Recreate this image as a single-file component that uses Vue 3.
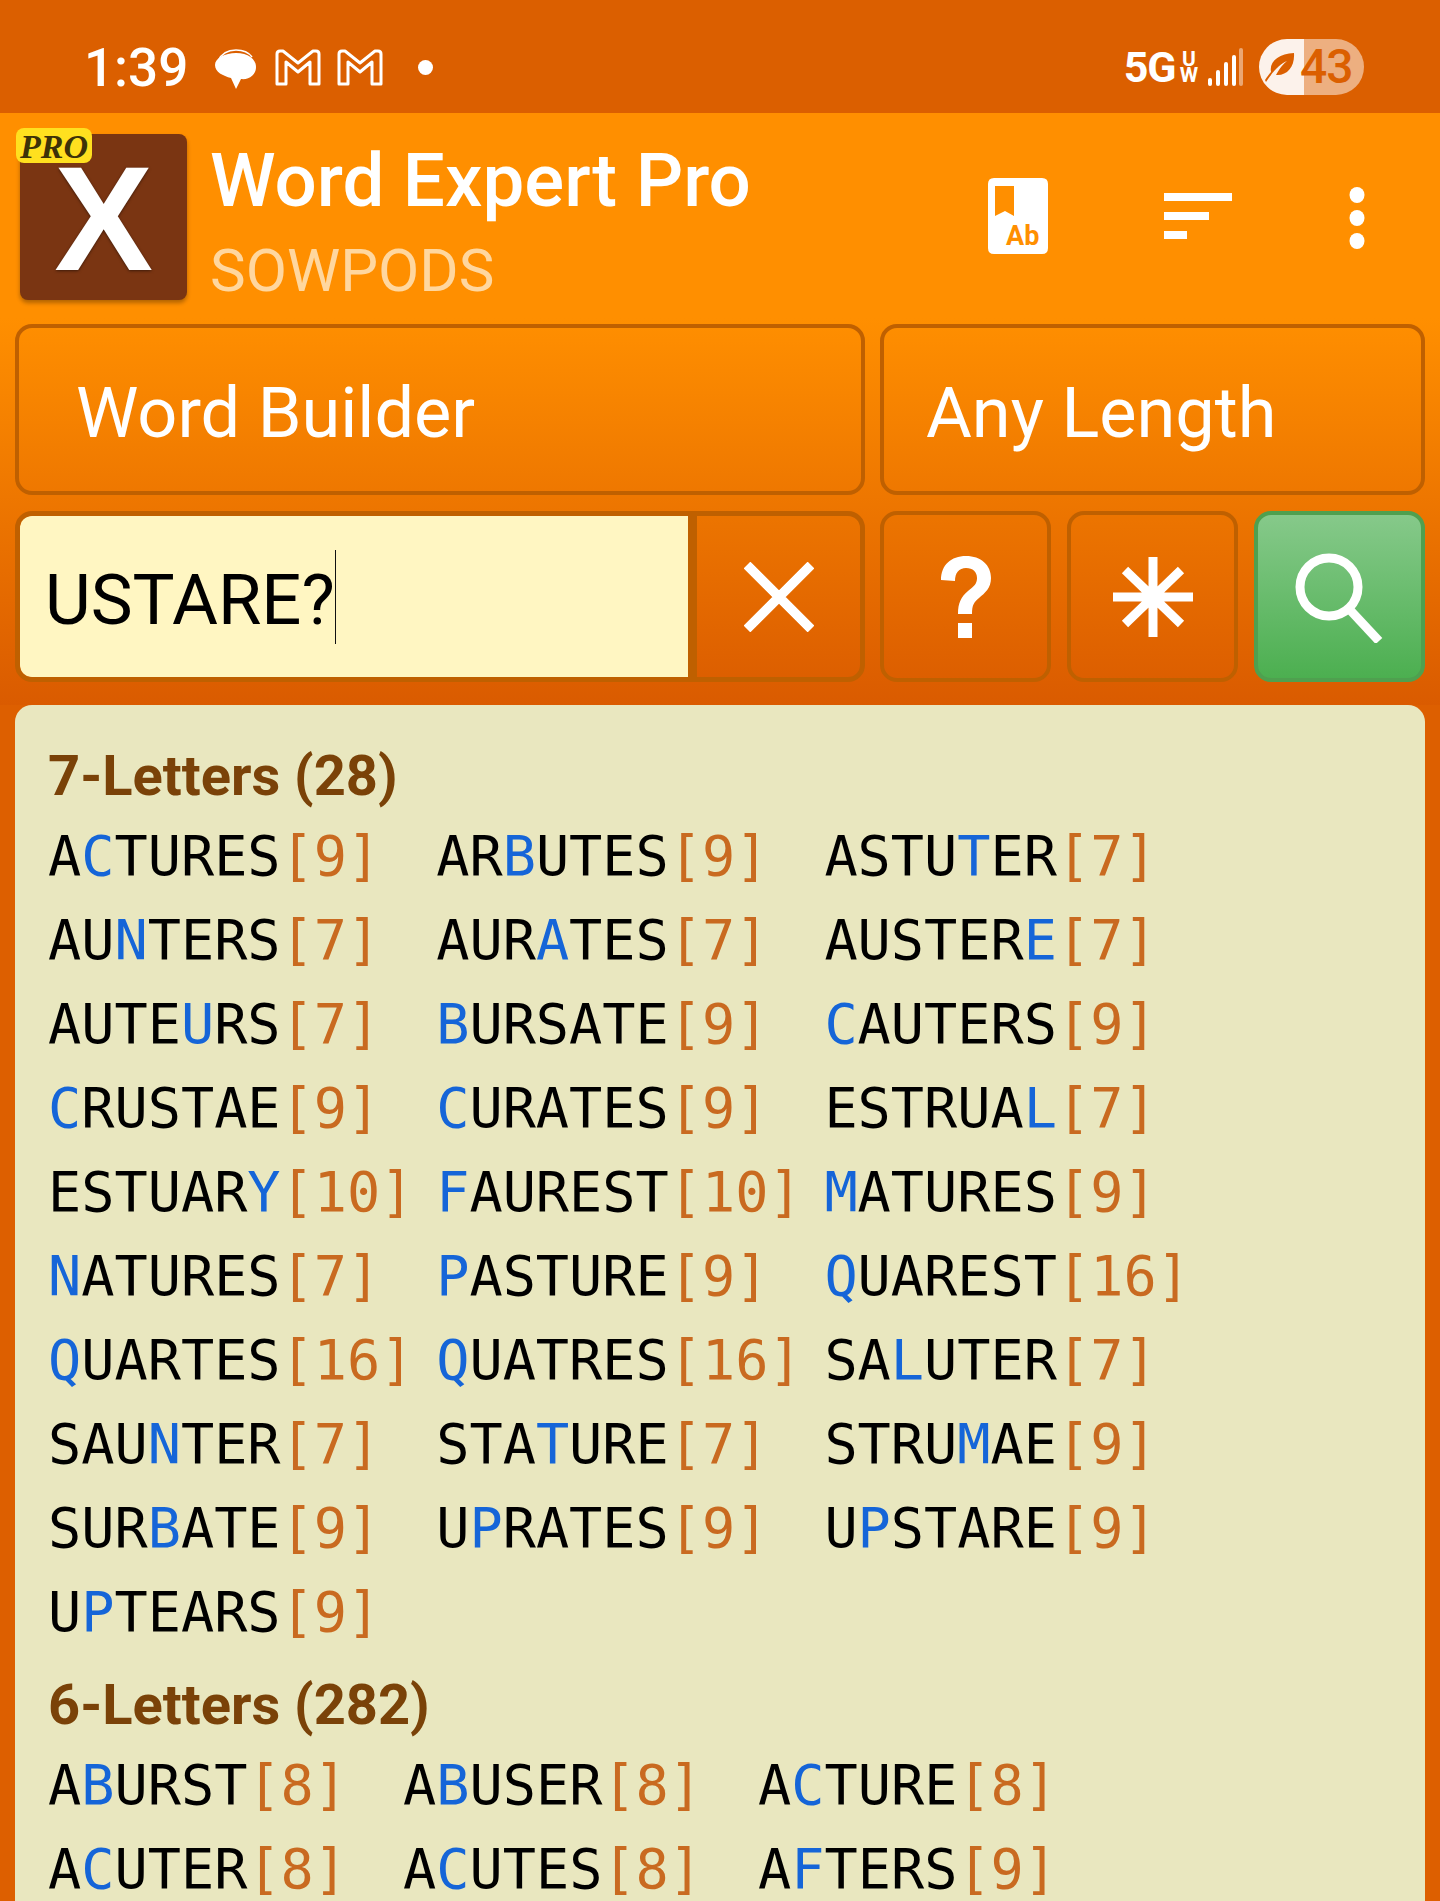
<script setup>
// word, index of the letter that came from the blank, score
const sevens = [
  ['ACTURES', 1, 9], ['ARBUTES', 2, 9], ['ASTUTER', 4, 7],
  ['AUNTERS', 2, 7], ['AURATES', 3, 7], ['AUSTERE', 6, 7],
  ['AUTEURS', 4, 7], ['BURSATE', 0, 9], ['CAUTERS', 0, 9],
  ['CRUSTAE', 0, 9], ['CURATES', 0, 9], ['ESTRUAL', 6, 7],
  ['ESTUARY', 6, 10], ['FAUREST', 0, 10], ['MATURES', 0, 9],
  ['NATURES', 0, 7], ['PASTURE', 0, 9], ['QUAREST', 0, 16],
  ['QUARTES', 0, 16], ['QUATRES', 0, 16], ['SALUTER', 2, 7],
  ['SAUNTER', 3, 7], ['STATURE', 3, 7], ['STRUMAE', 4, 9],
  ['SURBATE', 3, 9], ['UPRATES', 1, 9], ['UPSTARE', 1, 9],
  ['UPTEARS', 1, 9],
]
const sixes = [
  ['ABURST', 1, 8], ['ABUSER', 1, 8], ['ACTURE', 1, 8],
  ['ACUTER', 1, 8], ['ACUTES', 1, 8], ['AFTERS', 1, 9],
]
const groups = [
  { title: '7-Letters (28)', cls: 'cols-7', words: sevens },
  { title: '6-Letters (282)', cls: 'cols-6', words: sixes },
]
</script>

<template>
  <div class="app">
    <div class="status">
      <span class="time">1:39</span>
      <svg class="chat" viewBox="0 0 41 40"><path d="M3 12 Q8 1 21 1 Q32 1 37 8" fill="none" stroke="#fff" stroke-width="1.6"/><path d="M21 4 C33 4 41 10 41 18 C41 26 34 31 26 30 L21 40 L16 29 C8 27 0 23 0 16 C0 9 10 4 21 4 Z" fill="#fff"/></svg>
      <svg class="gm first" viewBox="0 0 46 37"><path d="M2 5 Q2 2 5 2 L8 2 L23 14 L38 2 L41 2 Q44 2 44 5 L44 35 L35 35 L35 13 L23 23 L11 13 L11 35 L2 35 Z" fill="none" stroke="#fff" stroke-width="3" stroke-linejoin="round"/></svg>
      <svg class="gm" viewBox="0 0 46 37"><path d="M2 5 Q2 2 5 2 L8 2 L23 14 L38 2 L41 2 Q44 2 44 5 L44 35 L35 35 L35 13 L23 23 L11 13 L11 35 L2 35 Z" fill="none" stroke="#fff" stroke-width="3" stroke-linejoin="round"/></svg>
      <span class="dot"></span>
      <div class="status-right">
        <span class="net">5G</span>
        <span class="uw"><span>U</span><span>W</span></span>
        <svg class="signal" viewBox="0 0 35 38">
          <rect x="0" y="30" width="4" height="8" rx="2" fill="#fff"/>
          <rect x="8" y="22" width="4" height="16" rx="2" fill="#fff"/>
          <rect x="16" y="14" width="4" height="24" rx="2" fill="#fff"/>
          <rect x="24" y="7" width="4" height="31" rx="2" fill="#fff"/>
          <rect x="31" y="0" width="4" height="38" rx="2" fill="#fff" opacity=".45"/>
        </svg>
        <div class="battery">
          <div class="batt-left">
            <svg viewBox="0 0 30 32"><path d="M6 21 C4 10 14 3 29 2 C30 16 22 25 11 24 C15 17 18 13 22 10 C15 13 9 19 1 31 L0 29 C2 26 4 23 6 21 Z" fill="#db5f00"/></svg>
          </div>
          <div class="batt-right"><span>43</span></div>
        </div>
      </div>
    </div>

    <div class="header">
      <div class="logo">
        <span class="logo-x">X</span>
        <span class="pro">PRO</span>
      </div>
      <div class="titles">
        <div class="title">Word Expert Pro</div>
        <div class="subtitle">SOWPODS</div>
      </div>
      <div class="actions">
        <svg class="book" viewBox="0 0 60 76">
          <path d="M6 0 H54 Q60 0 60 6 V70 Q60 76 54 76 H6 Q0 76 0 70 V6 Q0 0 6 0 Z" fill="#fff"/>
          <path d="M7 8 H26 V38 L17 33 L7 38 Z" fill="#ff8f00"/>
          <text x="18" y="67" class="book-text">Ab</text>
        </svg>
        <svg class="sort" viewBox="0 0 68 46">
          <rect x="0" y="0" width="68" height="8" fill="#fff"/>
          <rect x="0" y="19" width="45" height="8" fill="#fff"/>
          <rect x="0" y="38" width="23" height="8" fill="#fff"/>
        </svg>
        <svg class="more" viewBox="0 0 16 62">
          <ellipse cx="8" cy="8" rx="7.5" ry="8" fill="#fff"/>
          <ellipse cx="8" cy="31" rx="7.5" ry="8" fill="#fff"/>
          <ellipse cx="8" cy="54" rx="7.5" ry="8" fill="#fff"/>
        </svg>
      </div>
    </div>

    <div class="controls">
      <div class="row">
        <div class="btn wide left-col">Word Builder</div>
        <div class="btn wide right-col">Any Length</div>
      </div>
      <div class="row">
        <div class="input-group left-col">
          <div class="field">USTARE?<span class="caret"></span></div>
          <div class="clear">
            <svg viewBox="0 0 70 70" width="70" height="70"><path d="M3 3 L67 67 M67 3 L3 67" stroke="#fff" stroke-width="9.5" fill="none"/></svg>
          </div>
        </div>
        <div class="tools right-col">
          <div class="btn tool">
            <svg viewBox="0 0 50 82" width="50" height="82"><path d="M0 24 C0 9 10 0 25 0 C40 0 50 9 50 22 C50 32 44 37 38 42 C33 46 31 49 31 58 H17 C17 47 20 41 27 35 C33 30 36 28 36 22 C36 16 32 12 25 12 C18 12 14 17 14 25 Z" fill="#fff"/><rect x="17" y="67" width="14" height="15" fill="#fff"/></svg>
          </div>
          <div class="btn tool">
            <svg viewBox="0 0 80 80" width="80" height="80"><path d="M40 0 V80 M0 40 H80 M12 13 L68 67 M68 13 L12 67" stroke="#fff" stroke-width="9" fill="none"/></svg>
          </div>
          <div class="btn tool go">
            <svg viewBox="0 0 90 90" width="90" height="90"><circle cx="34" cy="34" r="29" stroke="#fff" stroke-width="9" fill="none"/><path d="M56 58 L84 88" stroke="#fff" stroke-width="9" fill="none"/></svg>
          </div>
        </div>
      </div>
    </div>

    <div class="panel">
      <section v-for="g in groups" :key="g.title" class="group">
        <h2 class="heading">{{ g.title }}</h2>
        <div class="words" :class="g.cls">
          <div v-for="w in g.words" :key="w[0]" class="word">
            <span>{{ w[0].slice(0, w[1]) }}</span><span class="blank">{{ w[0][w[1]] }}</span><span>{{ w[0].slice(w[1] + 1) }}</span><span class="score">[{{ w[2] }}]</span>
          </div>
        </div>
      </section>
    </div>
  </div>
</template>

<style>
body { margin: 0; background: #dd5f00; }
</style>

<style scoped>
.app {
  width: 1440px;
  height: 1901px;
  overflow: hidden;
  background: #dd5f00;
  font-family: Roboto, sans-serif;
  display: flex;
  flex-direction: column;
}

/* status bar */
.status {
  height: 113px;
  flex-shrink: 0;
  background: #db5f00;
  display: flex;
  align-items: center;
  padding: 21px 76px 0 84px;
  box-sizing: border-box;
  color: #fff;
}
.time { font-size: 53px; font-weight: 500; width: 131px; margin-top: 2px; }
.chat { width: 41px; height: 40px; margin-top: 3px; }
.gm { width: 46px; height: 37px; margin-left: 16px; }
.gm.first { margin-left: 19px; }
.dot { width: 15px; height: 15px; border-radius: 50%; background: #fff; margin-left: 35px; }
.status-right { margin-left: auto; display: flex; align-items: center; }
.net { font-size: 43px; font-weight: 700; letter-spacing: -1px; }
.uw { display: flex; flex-direction: column; font-size: 21px; font-weight: 700; line-height: 16px; margin-left: 4px; text-align: center; }
.signal { width: 35px; height: 38px; margin-left: 10px; }
.battery { display: flex; width: 105px; height: 56px; border-radius: 28px; overflow: hidden; margin-left: 16px; }
.batt-left { width: 45px; background: rgba(255, 255, 255, 0.92); display: flex; align-items: center; padding-left: 6px; box-sizing: border-box; }
.batt-left svg { width: 30px; height: 32px; }
.batt-right { flex: 1; background: rgba(255, 255, 255, 0.5); position: relative; }
.batt-right span { position: absolute; left: -4px; top: 0; line-height: 56px; font-size: 48px; font-weight: 500; color: #db5f00; letter-spacing: -1px; }

/* app bar */
.header {
  height: 205px;
  flex-shrink: 0;
  background: #ff8f00;
  display: flex;
  align-items: center;
  padding: 0 75px 0 20px;
  box-sizing: border-box;
}
.logo {
  width: 167px;
  height: 166px;
  margin-top: 2px;
  position: relative;
  background: #7a3512;
  border-radius: 8px;
  box-shadow: 0 3px 4px rgba(0, 0, 0, 0.3);
  display: flex;
  align-items: center;
  justify-content: center;
}
.logo-x {
  font-family: "Liberation Sans", sans-serif;
  font-weight: 700;
  font-size: 148px;
  line-height: 165px;
  color: #fff;
  margin-top: 4px;
  text-shadow: 0 1px 3px rgba(0, 0, 0, 0.5);
}
.pro {
  position: absolute;
  left: -4px;
  top: -6px;
  width: 76px;
  height: 35px;
  background: #ffe01f;
  border-radius: 8px;
  text-align: center;
  font-family: "Liberation Serif", serif;
  font-style: italic;
  font-weight: 700;
  font-size: 34px;
  line-height: 37px;
  color: #3d3208;
}
.titles { margin-left: 23px; margin-top: 11px; }
.title { font-size: 74.5px; font-weight: 500; line-height: 86px; color: #fff; }
.subtitle { font-size: 60px; line-height: 66px; color: #ffd79f; margin-top: 14px; }
.actions { margin-left: auto; display: flex; align-items: center; }
.book { width: 60px; height: 76px; }
.book-text { font-family: Roboto, sans-serif; font-weight: 700; font-size: 27px; fill: #ff8f00; }
.sort { width: 68px; height: 46px; margin-left: 116px; }
.more { width: 16px; height: 62px; margin-left: 117px; margin-top: 4px; }

/* buttons */
.controls {
  flex-shrink: 0;
  padding: 6px 15px 23px;
  background: linear-gradient(#ff8f00, #da5b00);
  display: flex;
  flex-direction: column;
  gap: 16px;
}
.row { display: flex; gap: 15px; height: 171px; }
.left-col { width: 850px; }
.right-col { width: 545px; }
.btn {
  box-sizing: border-box;
  border: 4px solid #bf6000;
  border-radius: 17px;
  display: flex;
  align-items: center;
  color: #fff;
  padding-top: 6px;
}
.wide { font-size: 70.3px; padding-left: 57px; }
.right-col.wide { padding-left: 42px; }
.tool.btn { padding-top: 0; }
.input-group {
  box-sizing: border-box;
  border: 5px solid #bf6000;
  border-radius: 17px;
  display: flex;
  overflow: hidden;
}
.field {
  width: 643px;
  background: #fff6c2;
  border-right: 9px solid #bf6000;
  border-radius: 10px 0 0 10px;
  display: flex;
  align-items: center;
  padding: 6px 0 0 25px;
  font-size: 70.5px;
  color: #000;
}
.caret { width: 1.5px; height: 94px; background: #111; margin-top: -6px; }
.clear { flex: 1; display: flex; align-items: center; justify-content: center; }
.tools { display: flex; justify-content: space-between; }
.tool { width: 171px; justify-content: center; }
.go { background: linear-gradient(#86c98a, #4caf50); border-color: #4fa04f; }
.go svg { margin-left: 1px; margin-top: 3px; }

/* results */
.panel {
  flex: 1;
  margin: 0 15px;
  padding: 33px 33px 0;
  background: #e9e7bf;
  border-radius: 17px 17px 0 0;
}
.group { margin-bottom: 13px; }
.heading {
  margin: 0;
  font-size: 56px;
  font-weight: 700;
  line-height: 76px;
  color: #7a4208;
}
.words {
  display: grid;
  font-family: "DejaVu Sans Mono", monospace;
  font-size: 55.2px;
  line-height: 84px;
  white-space: pre;
  color: #000;
}
.cols-7 { grid-template-columns: repeat(3, 388.2px); }
.cols-6 { grid-template-columns: repeat(3, 355px); }
.blank { color: #1565d8; }
.score { color: #c96a20; }
</style>
